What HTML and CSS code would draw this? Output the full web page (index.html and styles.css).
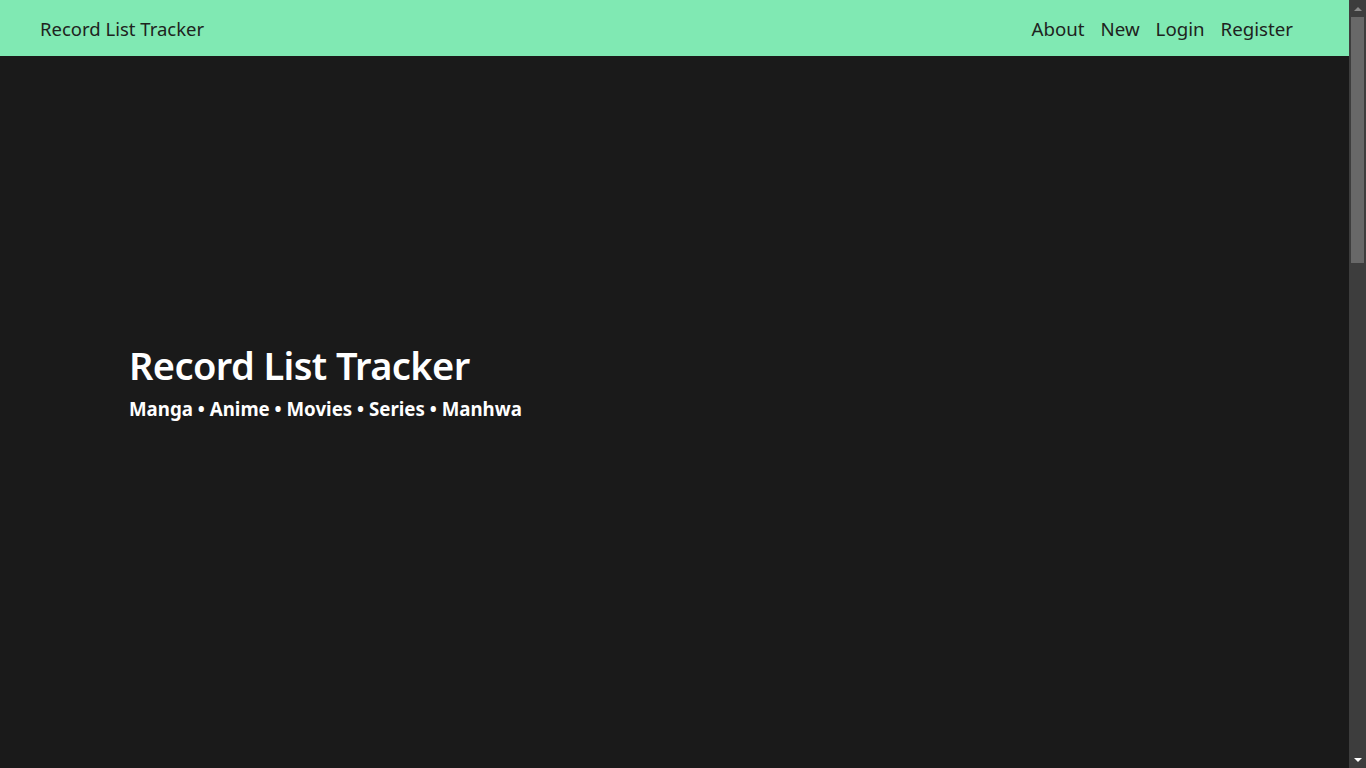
FILE: index.html
```html
<!DOCTYPE html>
<html lang="en">
<head>
<meta charset="utf-8">
<title>Record List Tracker</title>
<link rel="stylesheet" href="styles.css">
</head>
<body>
<div class="page">
  <nav class="navbar">
    <a class="brand" href="#">Record List Tracker</a>
    <ul class="nav-links">
      <li><a href="#">About</a></li>
      <li><a href="#">New</a></li>
      <li><a href="#">Login</a></li>
      <li><a href="#">Register</a></li>
    </ul>
  </nav>
  <main class="hero">
    <h1 class="hero-title">Record List Tracker</h1>
    <p class="hero-sub">Manga • Anime • Movies • Series • Manhwa</p>
  </main>
</div>
<aside class="scrollbar" aria-hidden="true">
  <div class="sb-btn sb-up"><span class="tri-up"></span></div>
  <div class="sb-track"><div class="sb-thumb"></div></div>
  <div class="sb-btn sb-down"><span class="tri-down"></span></div>
</aside>
</body>
</html>
```
FILE: styles.css
```css
body {
  margin: 0;
  height: 100vh;
  overflow: hidden;
  display: flex;
  background: #1a1a1a;
  color: #fff;
  font-family: "Noto Sans", "Open Sans", sans-serif;
}
.page {
  flex: 1;
  min-width: 0;
}
.navbar {
  height: 56px;
  background: #80e9b3;
  display: flex;
  align-items: center;
  justify-content: space-between;
  padding: 1px 48px 0 40px;
  box-sizing: border-box;
}
.brand {
  font-size: 18.5px;
  color: #1e2320;
  text-decoration: none;
}
.nav-links {
  list-style: none;
  display: flex;
  margin: 0;
  padding: 0;
}
.nav-links a {
  display: block;
  padding: 0 8px;
  font-size: 18.7px;
  color: #1e2320;
  text-decoration: none;
}
.hero {
  padding: 286px 0 0 129px;
}
.hero-title {
  margin: 0;
  font-size: 38px;
  line-height: 46px;
  font-weight: 600;
  letter-spacing: -0.6px;
}
.hero-sub {
  margin: 8px 0 0;
  font-size: 18.7px;
  line-height: 26px;
  font-weight: 700;
}
.scrollbar {
  width: 17px;
  height: 100vh;
  background: #3d3d3d;
  display: flex;
  flex-direction: column;
  flex-shrink: 0;
}
.sb-btn {
  height: 17px;
  display: flex;
  align-items: center;
  justify-content: center;
}
.tri-up {
  width: 0;
  height: 0;
  border-left: 4px solid transparent;
  border-right: 4px solid transparent;
  border-bottom: 4px solid #8a8a8a;
}
.tri-down {
  width: 0;
  height: 0;
  border-left: 4px solid transparent;
  border-right: 4px solid transparent;
  border-top: 4px solid #ffffff;
}
.sb-track {
  flex: 1;
  padding: 0 2px;
}
.sb-thumb {
  height: 246px;
  background: #686868;
}
```
